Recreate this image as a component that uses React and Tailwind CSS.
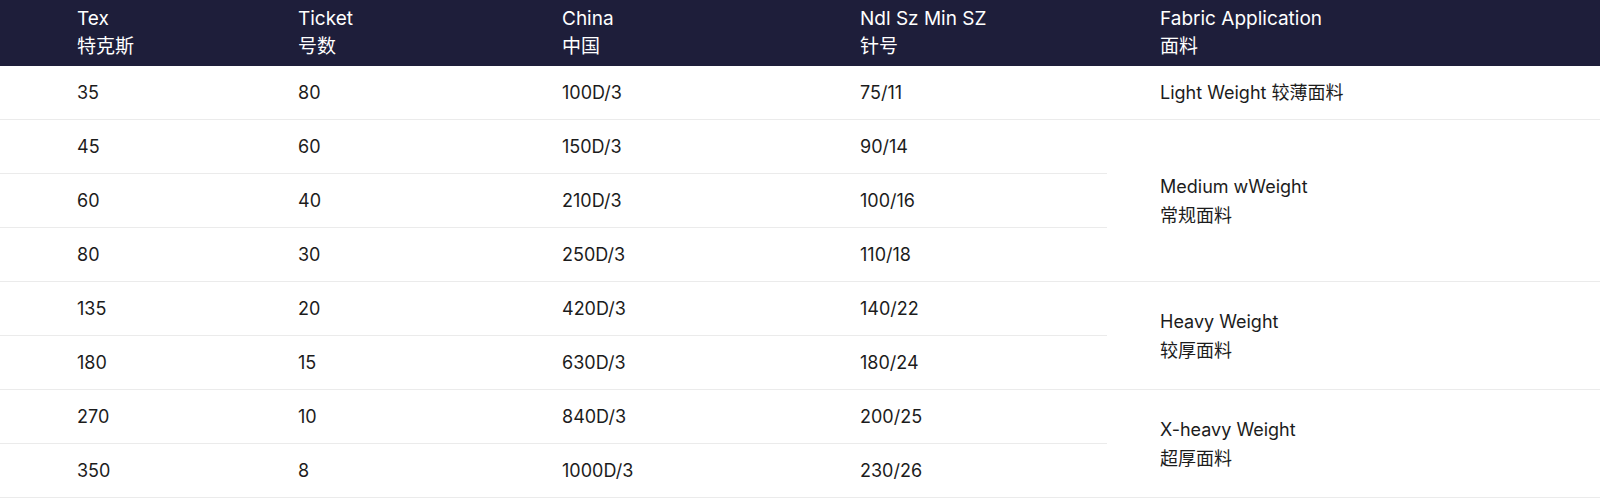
const rows = [
  ["35", "80", "100D/3", "75/11"],
  ["45", "60", "150D/3", "90/14"],
  ["60", "40", "210D/3", "100/16"],
  ["80", "30", "250D/3", "110/18"],
  ["135", "20", "420D/3", "140/22"],
  ["180", "15", "630D/3", "180/24"],
  ["270", "10", "840D/3", "200/25"],
  ["350", "8", "1000D/3", "230/26"],
];

// fabric column spans several rows
const fabric = [
  { start: 0, span: 1, lines: ["Light Weight 较薄面料"] },
  { start: 1, span: 3, lines: ["Medium wWeight", "常规面料"] },
  { start: 4, span: 2, lines: ["Heavy Weight", "较厚面料"] },
  { start: 6, span: 2, lines: ["X-heavy Weight", "超厚面料"] },
];

const spanClass = {
  1: "row-span-1",
  2: "row-span-2",
  3: "row-span-3",
};

const headers = [
  ["Tex", "特克斯"],
  ["Ticket", "号数"],
  ["China", "中国"],
  ["Ndl Sz Min SZ", "针号"],
  ["Fabric Application", "面料"],
];

const cols = "grid grid-cols-[298px_264px_298px_247px_1fr]";
const padFirst = ["pl-[77px]", "", "", "", "pl-[53px]"];

export default function App() {
  return (
    <div
      className="w-[1600px] h-[498px] bg-white text-[18px] text-[#1c1c1c]"
      style={{ fontFamily: 'Inter, "Noto Sans CJK SC", sans-serif' }}
    >
      <div className={`${cols} h-[66px] bg-[#1e1e3a] text-white text-[19px]`}>
        {headers.map((h, i) => (
          <div key={i} className={`flex flex-col justify-center leading-[28px] ${padFirst[i]}`}>
            <span>{h[0]}</span>
            <span>{h[1]}</span>
          </div>
        ))}
      </div>

      <div className={`${cols} grid-rows-[repeat(8,54px)]`}>
        {rows.map((r, ri) => {
          const f = fabric.find((x) => x.start === ri);
          return [
            ...r.map((v, ci) => (
              <div
                key={`${ri}-${ci}`}
                className={`flex items-center border-b border-[#ebebeb] ${padFirst[ci]}`}
              >
                {v}
              </div>
            )),
            f && (
              <div
                key={`f-${ri}`}
                className={`${spanClass[f.span]} flex flex-col justify-center leading-[29px] border-b border-[#ebebeb] pl-[53px]`}
              >
                {f.lines.map((l) => (
                  <span key={l}>{l}</span>
                ))}
              </div>
            ),
          ];
        })}
      </div>
    </div>
  );
}
